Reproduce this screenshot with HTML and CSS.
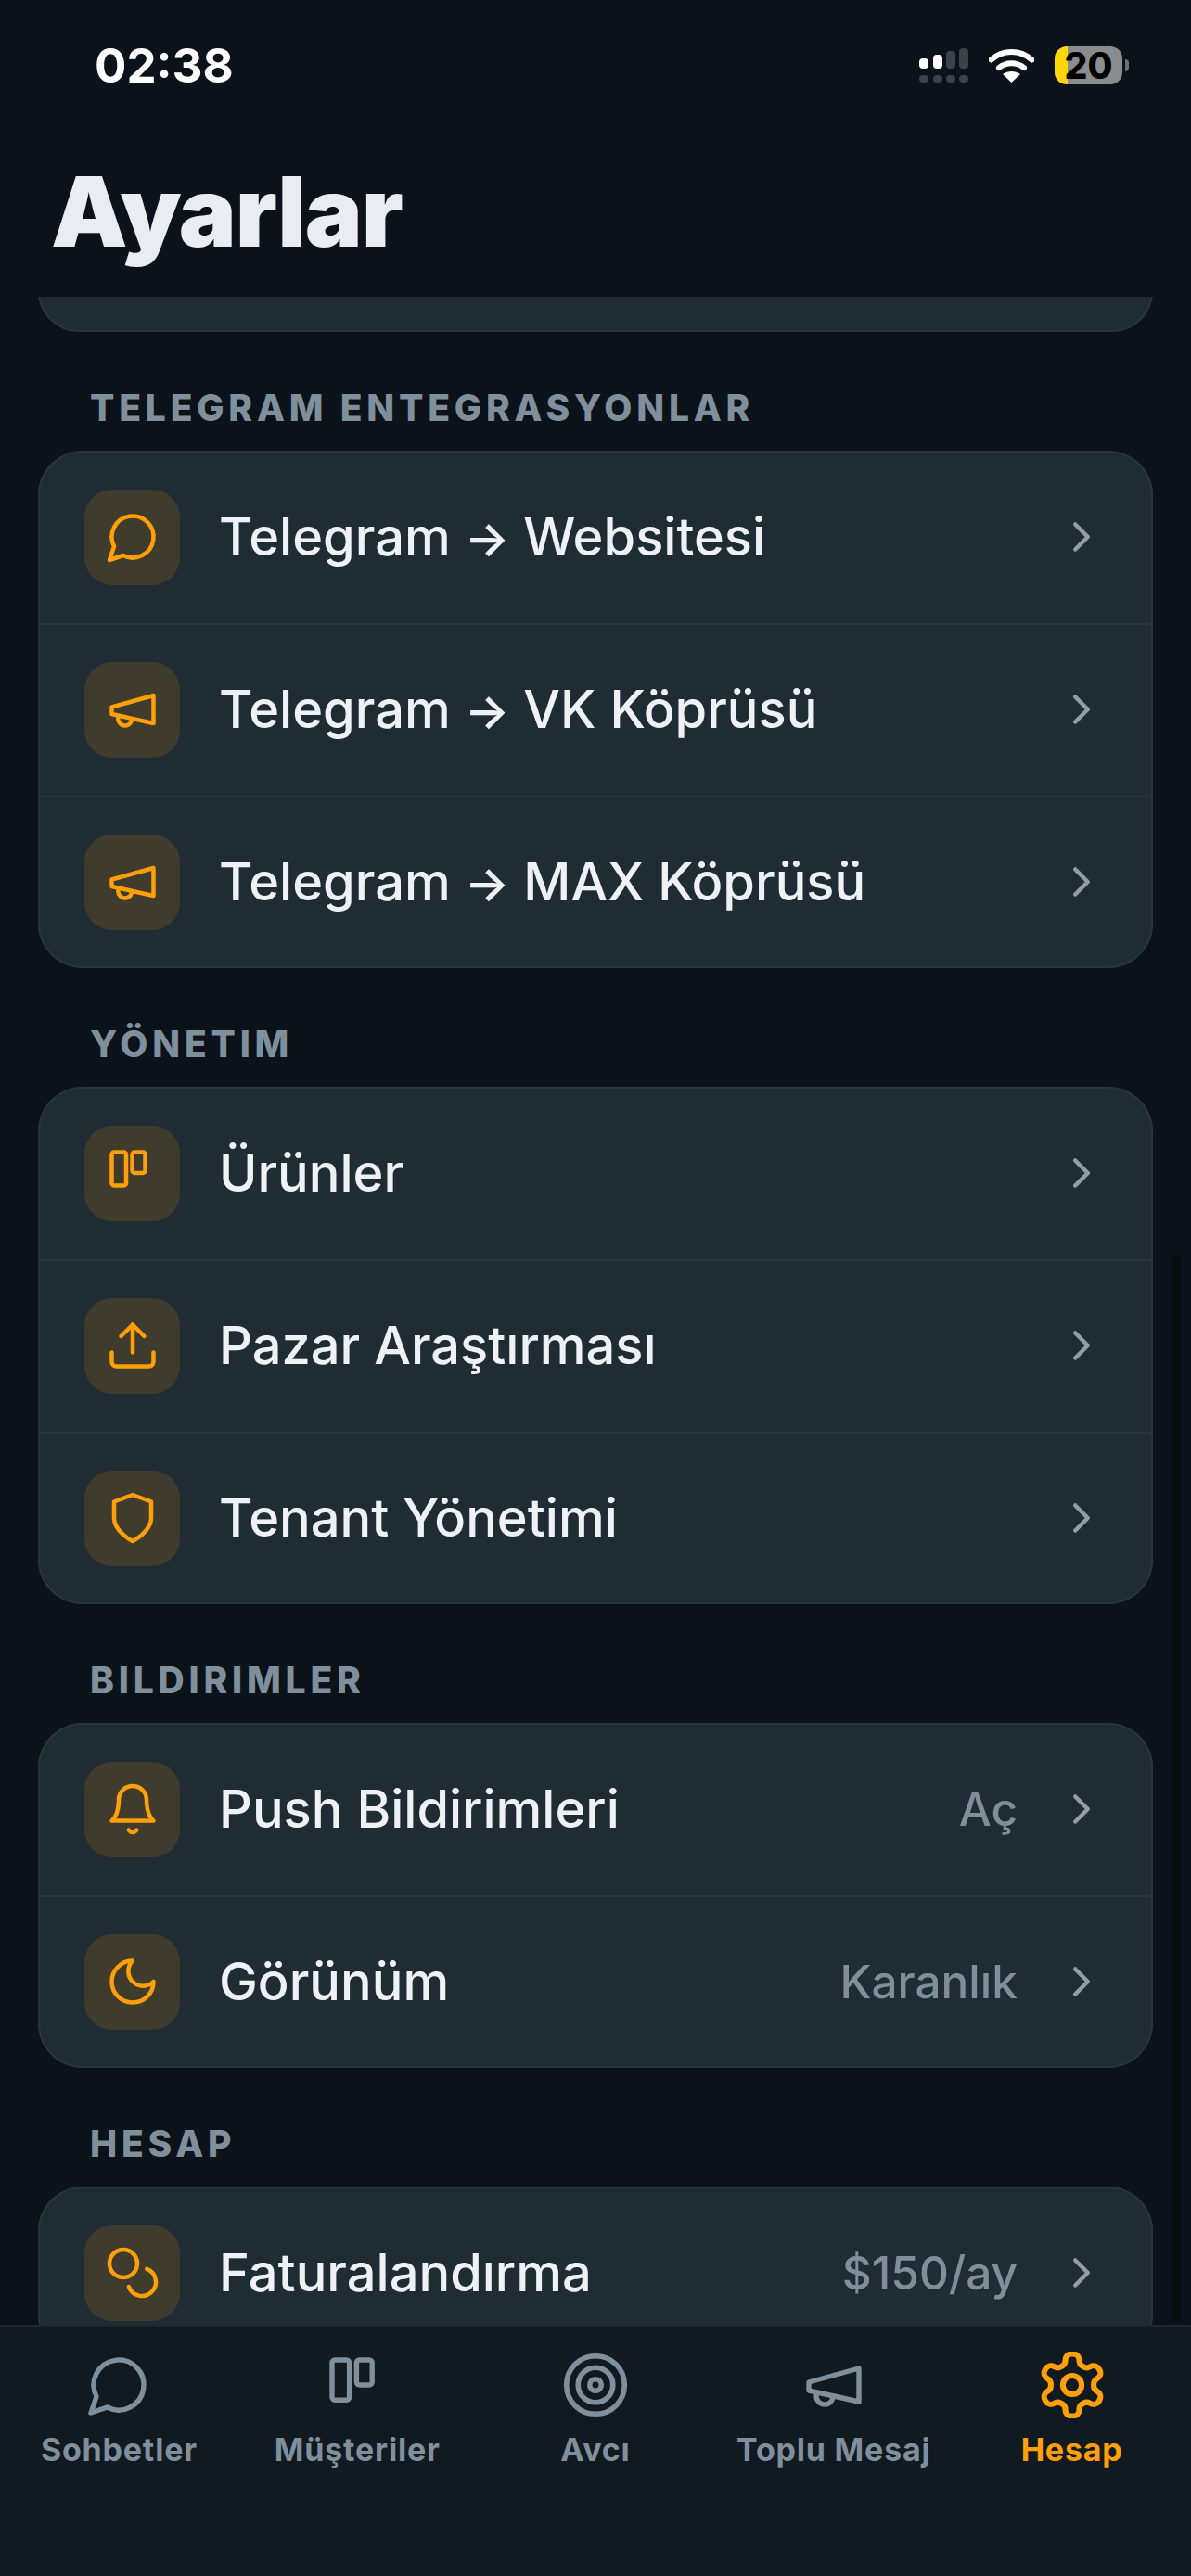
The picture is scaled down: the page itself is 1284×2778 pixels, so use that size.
FILE: index.html
```html
<!DOCTYPE html>
<html lang="tr">
<head>
    <meta charset="utf-8">
    <title>Ayarlar</title>
    <link rel="stylesheet" href="styles.css">
</head>
<body>
    <svg class="sprite" width="0" height="0">
        <symbol id="i-chat" viewBox="0 0 24 24"><path d="M7.9 20A9 9 0 1 0 4 16.1L2 22Z"/></symbol>
        <symbol id="i-mega" viewBox="0 0 24 24"><path d="m3 11 18-5v12L3 14v-3z"/><path d="M11.6 16.8a3 3 0 1 1-5.8-1.6"/></symbol>
        <symbol id="i-board" viewBox="0 0 24 24"><rect x="3" y="3" width="6.2" height="14.4" rx="1"/><rect x="11.8" y="3" width="5.6" height="9" rx="1"/></symbol>
        <symbol id="i-upload" viewBox="0 0 24 24"><path d="M21 15v4a2 2 0 0 1-2 2H5a2 2 0 0 1-2-2v-4"/><path d="M17 8l-5-5-5 5"/><path d="M12 3v12"/></symbol>
        <symbol id="i-shield" viewBox="0 0 24 24"><path d="M12 22s8-4 8-10V5l-8-3-8 3v7c0 6 8 10 8 10z"/></symbol>
        <symbol id="i-bell" viewBox="0 0 24 24"><path d="M6 8a6 6 0 0 1 12 0c0 7 3 9 3 9H3s3-2 3-9"/><path d="M10.3 21a1.94 1.94 0 0 0 3.4 0"/></symbol>
        <symbol id="i-moon" viewBox="0 0 24 24"><path d="M12 3a6 6 0 0 0 9 9 9 9 0 1 1-9-9Z"/></symbol>
        <symbol id="i-coins" viewBox="0 0 24 24"><circle cx="8" cy="8" r="6"/><path d="M18.09 10.37A6 6 0 1 1 10.34 18"/></symbol>
        <symbol id="i-target" viewBox="0.5 0.5 23 23"><circle cx="12" cy="12" r="10"/><circle cx="12" cy="12" r="6"/><circle cx="12" cy="12" r="2"/></symbol>
        <symbol id="i-gear" viewBox="1.3 1.3 21.4 21.4"><path d="M12.22 2h-.44a2 2 0 0 0-2 2v.18a2 2 0 0 1-1 1.73l-.43.25a2 2 0 0 1-2 0l-.15-.08a2 2 0 0 0-2.73.73l-.22.38a2 2 0 0 0 .73 2.73l.15.1a2 2 0 0 1 1 1.72v.51a2 2 0 0 1-1 1.74l-.15.09a2 2 0 0 0-.73 2.73l.22.38a2 2 0 0 0 2.73.73l.15-.08a2 2 0 0 1 2 0l.43.25a2 2 0 0 1 1 1.73V20a2 2 0 0 0 2 2h.44a2 2 0 0 0 2-2v-.18a2 2 0 0 1 1-1.73l.43-.25a2 2 0 0 1 2 0l.15.08a2 2 0 0 0 2.73-.73l.22-.39a2 2 0 0 0-.73-2.73l-.15-.08a2 2 0 0 1-1-1.74v-.5a2 2 0 0 1 1-1.74l.15-.09a2 2 0 0 0 .73-2.73l-.22-.38a2 2 0 0 0-2.73-.73l-.15.08a2 2 0 0 1-2 0l-.43-.25a2 2 0 0 1-1-1.73V4a2 2 0 0 0-2-2z"/><circle cx="12" cy="12" r="3"/></symbol>
        <symbol id="i-next" viewBox="0 0 24 24"><path d="m9 18 6-6-6-6"/></symbol>
    </svg>

    <div class="app">
        <header class="top">
            <div class="status">
                <span class="time">02:38</span>
                <div class="status-icons">
                    <svg class="signal" width="53" height="37" viewBox="0 0 53 37">
                        <rect x="0" y="11" width="10" height="11" rx="4" fill="#fff"/>
                        <rect x="15" y="7" width="10" height="15" rx="4" fill="#fff"/>
                        <rect x="29" y="3" width="10" height="19" rx="4" fill="#3c4247"/>
                        <rect x="43" y="0" width="10" height="22" rx="4" fill="#3c4247"/>
                        <rect x="0" y="29" width="10" height="8" rx="4" fill="#3c4247"/>
                        <rect x="15" y="29" width="10" height="8" rx="4" fill="#3c4247"/>
                        <rect x="29" y="29" width="10" height="8" rx="4" fill="#3c4247"/>
                        <rect x="43" y="29" width="10" height="8" rx="4" fill="#3c4247"/>
                    </svg>
                    <svg class="wifi" width="49" height="37" viewBox="0 0 49 37">
                        <path d="M2.5 12.5C15 1 34 1 46.5 12.5" fill="none" stroke="#fff" stroke-width="6" stroke-linecap="round"/>
                        <path d="M11 21c8-6.500 19-6.500 27 0" fill="none" stroke="#fff" stroke-width="6" stroke-linecap="round"/>
                        <path d="M24.500 37 15 28c5.500-4 13.500-4 19 0z" fill="#fff"/>
                    </svg>
                    <div class="battery">
                        <div class="battery-body">20</div>
                        <div class="battery-tip"></div>
                    </div>
                </div>
            </div>
            <h1>Ayarlar</h1>
        </header>

        <main class="scroll">
            <div class="card stub"></div>

            <h2>TELEGRAM ENTEGRASYONLAR</h2>
            <div class="card">
                <div class="row">
                    <div class="ico"><svg><use href="#i-chat"/></svg></div>
                    <span class="name">Telegram <span class="arrow">→</span> Websitesi</span>
                    <svg class="next"><use href="#i-next"/></svg>
                </div>
                <div class="row">
                    <div class="ico"><svg><use href="#i-mega"/></svg></div>
                    <span class="name">Telegram <span class="arrow">→</span> VK Köprüsü</span>
                    <svg class="next"><use href="#i-next"/></svg>
                </div>
                <div class="row">
                    <div class="ico"><svg><use href="#i-mega"/></svg></div>
                    <span class="name">Telegram <span class="arrow">→</span> MAX Köprüsü</span>
                    <svg class="next"><use href="#i-next"/></svg>
                </div>
            </div>

            <h2>YÖNETIM</h2>
            <div class="card">
                <div class="row">
                    <div class="ico"><svg><use href="#i-board"/></svg></div>
                    <span class="name">Ürünler</span>
                    <svg class="next"><use href="#i-next"/></svg>
                </div>
                <div class="row">
                    <div class="ico"><svg><use href="#i-upload"/></svg></div>
                    <span class="name">Pazar Araştırması</span>
                    <svg class="next"><use href="#i-next"/></svg>
                </div>
                <div class="row">
                    <div class="ico"><svg><use href="#i-shield"/></svg></div>
                    <span class="name">Tenant Yönetimi</span>
                    <svg class="next"><use href="#i-next"/></svg>
                </div>
            </div>

            <h2>BILDIRIMLER</h2>
            <div class="card">
                <div class="row">
                    <div class="ico"><svg><use href="#i-bell"/></svg></div>
                    <span class="name">Push Bildirimleri</span>
                    <span class="value">Aç</span>
                    <svg class="next"><use href="#i-next"/></svg>
                </div>
                <div class="row">
                    <div class="ico"><svg><use href="#i-moon"/></svg></div>
                    <span class="name">Görünüm</span>
                    <span class="value">Karanlık</span>
                    <svg class="next"><use href="#i-next"/></svg>
                </div>
            </div>

            <h2>HESAP</h2>
            <div class="card">
                <div class="row">
                    <div class="ico"><svg><use href="#i-coins"/></svg></div>
                    <span class="name">Faturalandırma</span>
                    <span class="value">$150/ay</span>
                    <svg class="next"><use href="#i-next"/></svg>
                </div>
            </div>

            <div class="scrollbar"></div>
        </main>

        <nav class="tabs">
            <div class="tab"><svg><use href="#i-chat"/></svg><span>Sohbetler</span></div>
            <div class="tab"><svg><use href="#i-board"/></svg><span>Müşteriler</span></div>
            <div class="tab"><svg><use href="#i-target"/></svg><span>Avcı</span></div>
            <div class="tab"><svg><use href="#i-mega"/></svg><span>Toplu Mesaj</span></div>
            <div class="tab active"><svg><use href="#i-gear"/></svg><span>Hesap</span></div>
        </nav>
    </div>
</body>
</html>
```

FILE: styles.css
```css
* {
    box-sizing: border-box;
}

body {
    margin: 0;
    background-color: #0b1219;
    font-family: "Inter", "Liberation Sans", sans-serif;
}

.sprite {
    display: block;
    height: 0;
}

.app {
    display: flex;
    flex-direction: column;
    height: 2778px;
    overflow: hidden;
}

/* header */
.top {
    height: 320px;
    flex-shrink: 0;
    padding: 50px 0 0;
}

.status {
    display: flex;
    justify-content: space-between;
    align-items: center;
    height: 41px;
    padding: 0 67px 0 102px;
}

.time {
    color: #ffffff;
    font-size: 51px;
    font-weight: 700;
    line-height: 41px;
}

.status-icons {
    display: flex;
    align-items: center;
    gap: 22px;
}

.signal,
.wifi {
    display: block;
}

.battery {
    display: flex;
    align-items: center;
    gap: 3px;
}

.battery-body {
    width: 73px;
    height: 41px;
    border-radius: 13px;
    background: linear-gradient(90deg, #ffd60a 14px, #8a8d90 14px);
    color: #000000;
    font-size: 39px;
    font-weight: 800;
    line-height: 41px;
    text-align: center;
}

.battery-tip {
    width: 4px;
    height: 13px;
    border-radius: 0 4px 4px 0;
    background-color: #6d7073;
}

h1 {
    margin: 81px 0 0 55px;
    color: #e9edf1;
    font-size: 104px;
    font-weight: 900;
    line-height: 112px;
    letter-spacing: -1.2px;
}

/* list */
.scroll {
    position: relative;
    flex: 1;
    min-height: 0;
    overflow: hidden;
    padding: 0 41px;
}

h2 {
    height: 48px;
    margin: 57px 0 23px;
    padding: 1px 0 0 56px;
    color: #7f8f9b;
    font-size: 39px;
    font-weight: 800;
    line-height: 48px;
    letter-spacing: 4.8px;
}

.card {
    border-radius: 48px;
    background-color: #1f2c34;
    box-shadow: inset 0 0 0 2px #28353d;
}

.stub {
    height: 88px;
    margin-top: -50px;
}

.row {
    display: flex;
    align-items: center;
    gap: 42px;
    height: 186px;
    padding: 0 50px;
}

.row + .row {
    box-shadow: inset 0 2px 0 #28353d;
}

.ico {
    display: flex;
    justify-content: center;
    align-items: center;
    width: 103px;
    height: 103px;
    flex-shrink: 0;
    border-radius: 30px;
    background-color: #3f3c2e;
}

.ico svg {
    width: 60px;
    height: 60px;
    fill: none;
    stroke: #ff9f0a;
    stroke-width: 1.8;
    stroke-linecap: round;
    stroke-linejoin: round;
}

.name {
    flex: 1;
    color: #eef1f5;
    font-size: 56px;
    font-weight: 500;
}

.arrow {
    font-size: 51px;
    font-weight: 600;
}

.value {
    color: #7f8f99;
    font-size: 49.500px;
    font-weight: 500;
}

.next {
    width: 54px;
    height: 54px;
    flex-shrink: 0;
    fill: none;
    stroke: #8f9fa8;
    stroke-width: 2;
    stroke-linecap: round;
    stroke-linejoin: round;
}

.scrollbar {
    position: absolute;
    top: 1034px;
    right: 11px;
    width: 10px;
    height: 1150px;
    border-radius: 5px;
    background-color: #070c10;
}

/* bottom bar */
.tabs {
    display: flex;
    height: 271px;
    flex-shrink: 0;
    border-top: 2px solid #1c2730;
    background-color: #111a21;
}

.tab {
    display: flex;
    flex: 1;
    flex-direction: column;
    align-items: center;
    gap: 13px;
    padding-top: 27px;
    color: #7f8f9b;
    font-size: 34px;
    font-weight: 700;
    letter-spacing: 0.8px;
}

.tab svg {
    width: 72px;
    height: 72px;
    fill: none;
    stroke: currentColor;
    stroke-width: 1.8;
    stroke-linecap: round;
    stroke-linejoin: round;
}

.tab.active {
    color: #ff9f0a;
}
```
